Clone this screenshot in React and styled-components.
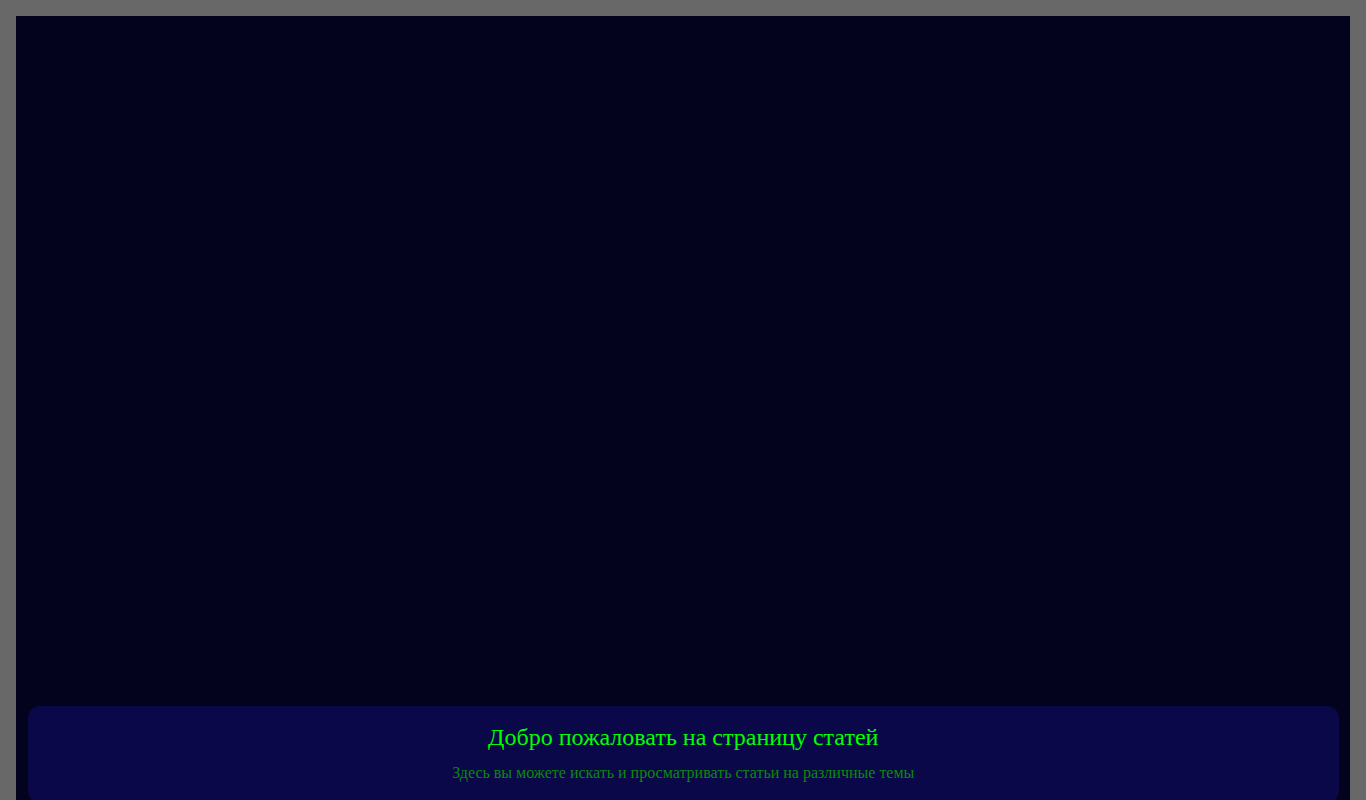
import React from "react";
import styled, { createGlobalStyle } from "styled-components";

const Global = createGlobalStyle`
  html, body {
    margin: 0;
    padding: 0;
    background: #686868;
    font-family: "Liberation Serif", "Times New Roman", serif;
  }
  body {
    padding: 16px 16px 0;
  }
`;

const Stage = styled.main`
  background: #03031e;
  height: 799px;
  box-sizing: border-box;
  padding: 0 11px 12px 11.5px;
  display: flex;
  flex-direction: column;
  justify-content: flex-end;
`;

const Panel = styled.section`
  background: #0a0849;
  border-radius: 12px;
  height: 97px;
  box-sizing: border-box;
  padding: 18px 20px 0;
  text-align: center;
`;

const Title = styled.h2`
  margin: 0 0 12.5px;
  font-size: 24px;
  font-weight: normal;
  line-height: normal;
  color: #00ff00;
`;

const Subtitle = styled.p`
  margin: 0;
  font-size: 16px;
  line-height: normal;
  color: #0a8a0a;
`;

export default function App() {
  return (
    <>
      <Global />
      <Stage>
        <Panel>
          <Title>Добро пожаловать на страницу статей</Title>
          <Subtitle>Здесь вы можете искать и просматривать статьи на различные темы</Subtitle>
        </Panel>
      </Stage>
    </>
  );
}
